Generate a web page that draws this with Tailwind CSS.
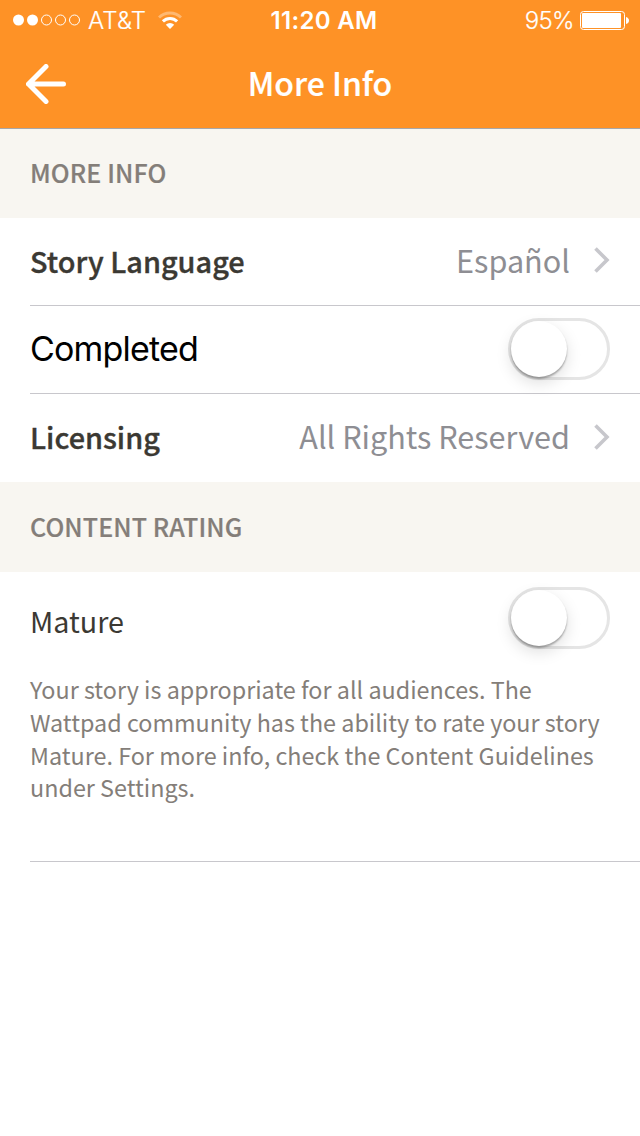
<!DOCTYPE html>
<html lang="en">
<head>
<meta charset="utf-8">
<title>More Info</title>
<script src="https://cdn.jsdelivr.net/npm/@tailwindcss/browser@4"></script>
</head>
<body class="w-[640px] h-[1136px] bg-white overflow-hidden font-['Noto_Sans_CJK_SC',sans-serif] text-[#3b3933]">
<header class="h-[129px] bg-[#fe9226] border-b border-[#a7a7aa] text-white">
  <div class="h-10 grid grid-cols-[210px_1fr_210px] items-center pl-[13px] pr-[11px] font-[Inter,sans-serif] text-[24px] leading-10 whitespace-nowrap">
    <div class="flex items-center">
      <svg class="w-[68px] h-3" viewBox="0 0 68 12" fill="none" stroke="#fff"><circle cx="5.5" cy="6" r="5.5" fill="#fff" stroke="none"/><circle cx="19.5" cy="6" r="5.5" fill="#fff" stroke="none"/><circle cx="33.5" cy="6" r="5"/><circle cx="47.5" cy="6" r="5"/><circle cx="61.5" cy="6" r="5"/></svg>
      <span class="ml-[7px] w-[70px] pt-[2px] leading-[38px] font-light [-webkit-text-stroke:0.2px_#fff] tracking-[0.2px]">AT&amp;T</span>
      <svg class="w-6 h-[18px]" viewBox="0 0 24 18" fill="none" stroke="#fff" stroke-width="3"><path d="M1 6.5A15.6 15.6 0 0 1 23 6.5" opacity=".35"/><path d="M4.9 10.4A10 10 0 0 1 19.1 10.4"/><path d="M12 18L7.8 13.8A6 6 0 0 1 16.2 13.8Z" fill="#fff" stroke="none"/></svg>
    </div>
    <div class="text-center pt-[2px] pl-[6px] leading-[38px] font-semibold tracking-[0.35px]">11:20 AM</div>
    <div class="flex items-center justify-end">
      <span class="mr-[6px] pt-[2px] leading-[38px] tracking-[-0.6px] font-light [-webkit-text-stroke:0.2px_#fff]">95%</span>
      <svg class="w-[49px] h-[19px]" viewBox="0 0 49 19"><rect x=".5" y=".5" width="44" height="18" rx="3" fill="none" stroke="#fff"/><rect x="2" y="2" width="39" height="15" rx="1" fill="#fff"/><path d="M46 6Q49 7 49 9.5T46 13Z" fill="#fff"/></svg>
    </div>
  </div>
  <div class="h-[88px] grid grid-cols-[80px_1fr_80px] items-center">
    <svg class="w-10 h-10 ml-[26px]" viewBox="0 0 40 40" fill="none" stroke="#fff" stroke-width="5" stroke-linecap="round" stroke-linejoin="round"><path d="M20 2.5L2.5 20L20 37.5M2.5 20H37.5"/></svg>
    <h1 class="text-center text-[32px] leading-[44px] pb-[4px] font-medium [-webkit-text-stroke:0.2px_#fff]">More Info</h1>
  </div>
</header>
<main>
  <h2 class="h-[89px] bg-[#f8f6f1] pl-[30px] text-[25px] leading-[87px] font-medium text-[#847e79] tracking-[0.1px] [-webkit-text-stroke:0.2px_#847e79]">MORE INFO</h2>
  <section class="pl-[30px]">
    <div class="h-[88px] border-b border-[#c8c7cc] pr-[30px] pb-[2px] flex items-center justify-between">
      <span class="text-[28.9px] font-medium [-webkit-text-stroke:0.35px_#3b3933]">Story Language</span>
      <span class="flex items-center gap-[24px] text-[30.6px] text-[#8e8e93]">Español<svg class="w-4 h-[26px]" viewBox="0 0 16 26" fill="none" stroke="#c7c7cc" stroke-width="3.6"><path d="M1.5 1.5L13 13L1.5 24.5"/></svg></span>
    </div>
    <div class="h-[88px] border-b border-[#c8c7cc] pr-[30px] pb-[2px] flex items-center justify-between">
      <span class="font-[Inter,sans-serif] text-[34px] tracking-[-0.8px] text-black">Completed</span>
      <span class="w-[102px] h-[62px] rounded-full border-[3px] border-[#e5e5e5] flex"><span class="w-14 h-14 rounded-full bg-white shadow-[0_6px_16px_rgba(0,0,0,0.13),0_2px_2px_rgba(0,0,0,0.3)]"></span></span>
    </div>
    <div class="h-[88px] pr-[30px] pb-[2px] flex items-center justify-between">
      <span class="text-[28.9px] font-medium [-webkit-text-stroke:0.35px_#3b3933]">Licensing</span>
      <span class="flex items-center gap-[24px] text-[30.6px] text-[#8e8e93]">All Rights Reserved<svg class="w-4 h-[26px]" viewBox="0 0 16 26" fill="none" stroke="#c7c7cc" stroke-width="3.6"><path d="M1.5 1.5L13 13L1.5 24.5"/></svg></span>
    </div>
  </section>
  <h2 class="h-[90px] bg-[#f8f6f1] pl-[30px] text-[25px] leading-[88px] font-medium text-[#847e79] tracking-[0.1px] [-webkit-text-stroke:0.2px_#847e79]">CONTENT RATING</h2>
  <section class="ml-[30px] h-[290px] border-b border-[#c8c7cc]">
    <div class="h-[85px] pt-[15px] pr-[30px] flex justify-between">
      <span class="text-[28.7px] leading-[68px]">Mature</span>
      <span class="w-[102px] h-[62px] rounded-full border-[3px] border-[#e5e5e5] flex"><span class="w-14 h-14 rounded-full bg-white shadow-[0_6px_16px_rgba(0,0,0,0.13),0_2px_2px_rgba(0,0,0,0.3)]"></span></span>
    </div>
    <p class="mt-[16.2px] text-[23.35px] leading-[32.7px] text-[#847e79] whitespace-nowrap">Your story is appropriate for all audiences. The<br>Wattpad community has the ability to rate your story<br>Mature. For more info, check the Content Guidelines<br>under Settings.</p>
  </section>
</main>
</body>
</html>
